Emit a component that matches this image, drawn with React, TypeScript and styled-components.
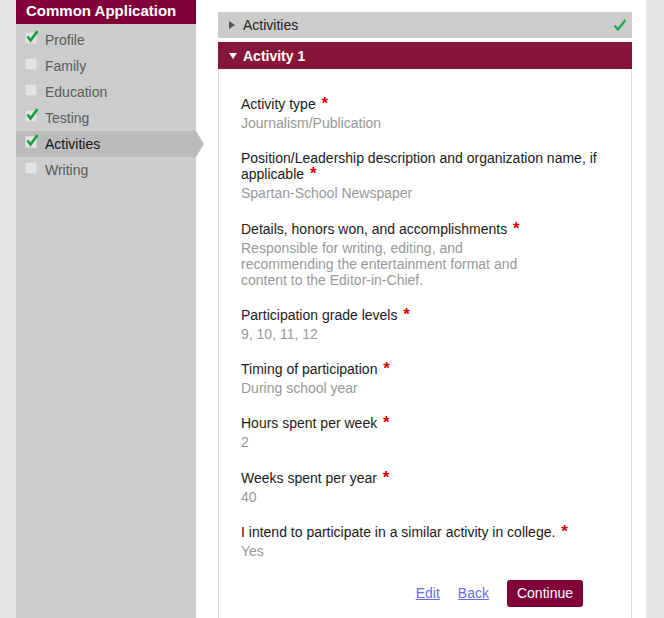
import React from "react";
import styled, { createGlobalStyle } from "styled-components";

const GlobalStyle = createGlobalStyle`
  html, body {
    margin: 0;
    padding: 0;
    background: #e6e6e6;
    font-family: "Liberation Sans", Arial, sans-serif;
  }
`;

const navItems = [
  { name: "Profile", done: true },
  { name: "Family", done: false },
  { name: "Education", done: false },
  { name: "Testing", done: true },
  { name: "Activities", done: true, active: true },
  { name: "Writing", done: false },
];

const fields = [
  { label: "Activity type", value: "Journalism/Publication" },
  {
    label: "Position/Leadership description and organization name, if applicable",
    value: "Spartan-School Newspaper",
  },
  {
    label: "Details, honors won, and accomplishments",
    value:
      "Responsible for writing, editing, and recommending the entertainment format and content to the Editor-in-Chief.",
  },
  { label: "Participation grade levels", value: "9, 10, 11, 12" },
  { label: "Timing of participation", value: "During school year" },
  { label: "Hours spent per week", value: "2" },
  { label: "Weeks spent per year", value: "40" },
  {
    label: "I intend to participate in a similar activity in college.",
    value: "Yes",
  },
];

const CheckBox = ({ checked }: { checked: boolean }) => (
  <Box>
    {checked && (
      <Tick width="13" height="13" viewBox="0 0 13 13">
        <path d="M1.5 6.5 L4.5 10.5 L11.5 1" fill="none" stroke="#12a33a" strokeWidth="2.6" />
      </Tick>
    )}
  </Box>
);

const App = () => {
  return (
    <>
      <GlobalStyle />
      <Page>
        <Sidebar>
          <SideHeader>Common Application</SideHeader>
          <NavList>
            {navItems.map((item) => (
              <NavItem key={item.name} $active={!!item.active}>
                <CheckBox checked={item.done} />
                {item.name}
              </NavItem>
            ))}
          </NavList>
        </Sidebar>
        <Main>
          <SectionBar>
            <RightArrow />
            Activities
            <DoneMark width="14" height="14" viewBox="0 0 14 14">
              <path d="M1.5 7.5 L5 11.5 L12.5 2" fill="none" stroke="#19a84a" strokeWidth="2.2" />
            </DoneMark>
          </SectionBar>
          <ActivityBar>
            <DownArrow />
            Activity 1
          </ActivityBar>
          <Card>
            {fields.map((f) => (
              <Field key={f.label}>
                <Label>
                  {f.label} <Required>*</Required>
                </Label>
                <Value>{f.value}</Value>
              </Field>
            ))}
            <Actions>
              <TextLink href="#">Edit</TextLink>
              <TextLink href="#">Back</TextLink>
              <ContinueButton>Continue</ContinueButton>
            </Actions>
          </Card>
        </Main>
      </Page>
    </>
  );
};

const Page = styled.div`
  display: flex;
  height: 618px;
  padding-left: 16px;
  overflow: hidden;
`;

const Sidebar = styled.div`
  width: 180px;
  flex-shrink: 0;
  background: #cccccc;
`;

const SideHeader = styled.div`
  height: 24px;
  line-height: 21px;
  background: #82003a;
  color: #fff;
  font-weight: bold;
  font-size: 15px;
  padding-left: 10px;
`;

const NavList = styled.div`
  padding-top: 3px;
`;

const NavItem = styled.div<{ $active: boolean }>`
  position: relative;
  display: flex;
  align-items: center;
  height: 26px;
  padding-left: 9px;
  font-size: 14px;
  color: ${(p) => (p.$active ? "#111" : "#5a5a5a")};
  background: ${(p) => (p.$active ? "#bbbbbb" : "transparent")};

  &::after {
    content: "";
    display: ${(p) => (p.$active ? "block" : "none")};
    position: absolute;
    right: -8px;
    top: 0;
    border-style: solid;
    border-width: 13px 0 13px 8px;
    border-color: transparent transparent transparent #bbbbbb;
  }
`;

const Box = styled.span`
  position: relative;
  width: 10px;
  height: 10px;
  margin-right: 8px;
  margin-top: -4px;
  background: #e4e4e4;
  border: 1px solid #d4d4d4;
`;

const Tick = styled.svg`
  position: absolute;
  left: 0;
  top: -3px;
`;

const Main = styled.div`
  width: 450px;
  flex-shrink: 0;
  background: #fff;
  padding: 12px 14px 0 22px;
  box-sizing: border-box;
`;

const SectionBar = styled.div`
  display: flex;
  align-items: center;
  height: 26px;
  background: #cccccc;
  color: #222;
  font-size: 14px;
  padding-left: 11px;
`;

const RightArrow = styled.span`
  width: 0;
  height: 0;
  border-style: solid;
  border-width: 4px 0 4px 6px;
  border-color: transparent transparent transparent #555;
  margin-right: 8px;
`;

const DoneMark = styled.svg`
  margin-left: auto;
  margin-right: 5px;
`;

const ActivityBar = styled.div`
  display: flex;
  align-items: center;
  height: 27px;
  margin-top: 4px;
  background: #88153a;
  color: #fff;
  font-weight: bold;
  font-size: 14px;
  padding-left: 11px;
`;

const DownArrow = styled.span`
  width: 0;
  height: 0;
  border-style: solid;
  border-width: 6px 4px 0 4px;
  border-color: #fff transparent transparent transparent;
  margin-right: 6px;
`;

const Card = styled.div`
  border-left: 1px solid #dddddd;
  border-right: 1px solid #dddddd;
  padding: 27px 20px 0 22px;
  height: 560px;
`;

const Field = styled.div`
  margin-bottom: 19.25px;
`;

const Label = styled.div`
  font-size: 14px;
  line-height: 16px;
  color: #1a1a1a;
`;

const Required = styled.span`
  color: #e00000;
  font-weight: bold;
  font-size: 17px;
  line-height: 10px;
  margin-left: 2px;
`;

const Value = styled.div`
  margin-top: 3px;
  max-width: 290px;
  font-size: 14px;
  line-height: 16px;
  color: #999999;
`;

const Actions = styled.div`
  display: flex;
  justify-content: flex-end;
  align-items: center;
  gap: 18px;
  margin-top: 21px;
  padding-right: 28px;
`;

const TextLink = styled.a`
  color: #6b6bf0;
  font-size: 14px;
`;

const ContinueButton = styled.button`
  height: 27px;
  padding: 0 10px;
  background: #80003a;
  color: #fff;
  border: none;
  border-radius: 3px;
  font-family: "Liberation Sans", Arial, sans-serif;
  font-size: 14px;
`;

export default App;
